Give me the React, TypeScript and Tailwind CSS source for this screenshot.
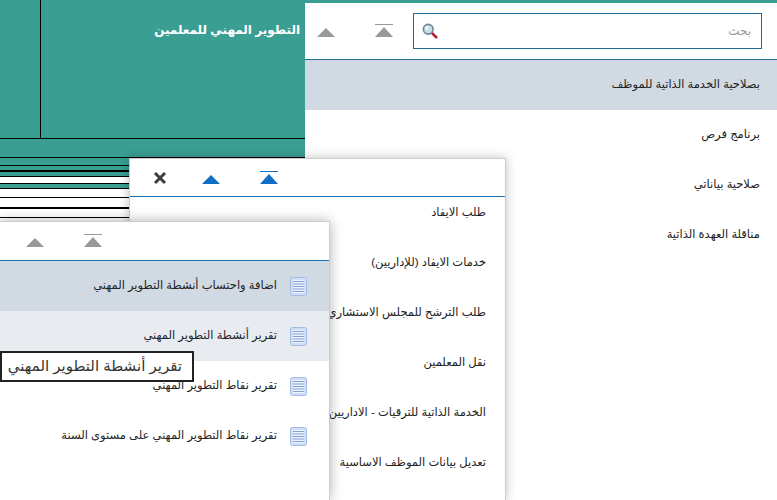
const font = "[font-family:'Liberation_Sans','DejaVu_Sans',sans-serif]";

function UpIcon({ top, color }: { top?: boolean; color: string }) {
  return (
    <svg width="18" height="14" viewBox="0 0 18 14" fill={color}>
      {top && <rect x="0" y="0" width="18" height="1" />}
      <path d={top ? "M9 3 L18 13 H0 Z" : "M9 4 L18 13 H0 Z"} />
    </svg>
  );
}

function CloseIcon() {
  return (
    <svg width="14" height="14" viewBox="0 0 14 14" stroke="#3d3d3d" strokeWidth="3" fill="none">
      <path d="M2 2 L12 12 M12 2 L2 12" />
    </svg>
  );
}

function SearchIcon() {
  return (
    <svg width="16" height="16" viewBox="0 0 18 18" fill="none">
      <path d="M10.5 10.5 L16 16" stroke="#b8232f" strokeWidth="3" strokeLinecap="round" />
      <circle cx="7" cy="7" r="5.5" fill="#bfe0e8" stroke="#75858e" strokeWidth="1.8" />
      <circle cx="5.5" cy="5.5" r="2" fill="#eef8fa" />
    </svg>
  );
}

function DocIcon() {
  return (
    <svg width="17" height="19" viewBox="0 0 17 19" className="shrink-0">
      <rect x="0.5" y="0.5" width="16" height="18" rx="2" fill="#cfdef6" stroke="#a3bbe6" />
      <rect x="3" y="3" width="11" height="13" fill="#eef3fc" />
      <path d="M3 4.5 H14 M3 7 H14 M3 9.5 H14 M3 12 H14 M3 14.5 H14" stroke="#7f9fd6" strokeWidth="1" />
    </svg>
  );
}

function Row({ label, className = "", icon }: { label: string; className?: string; icon?: boolean }) {
  return (
    <div className={`flex h-[50px] items-center gap-[13px] text-[11.5px] text-[#222] ${className}`}>
      {icon && <DocIcon />}
      <span className="whitespace-nowrap">{label}</span>
    </div>
  );
}

export default function App() {
  return (
    <div dir="ltr" className={`relative h-[500px] w-[777px] overflow-hidden bg-white ${font}`}>
      {/* page behind the windows */}
      <div className="h-[176px] bg-[#3a9e93]">
        <div className="flex h-[139px] border-b border-black">
          <div className="w-[41px] border-r border-black" />
          <div className="flex-1 pr-[476px] pt-[21px] text-right text-[12px] font-bold text-white" dir="rtl">
            <span className="mr-[1px] block whitespace-nowrap">التطوير المهني للمعلمين</span>
          </div>
        </div>
        <div className="h-[19px] border-b border-black" />
        <div className="h-[8px] border-b border-black" />
        <div className="h-[6px] border-b-2 border-black" />
        <div className="h-[5px] border-b border-black" />
      </div>
      <div className="h-[8px] border-b border-black" />
      <div className="h-[5px] border-b border-black bg-[#3a9e93]" />
      <div className="h-[9px] border-b border-black" />
      <div className="h-[11px] border-b-2 border-black" />
      <div className="h-[9px] border-b border-black" />

      {/* windows */}
      <div dir="rtl" className="absolute left-[305px] top-[3px] h-[497px] w-[472px] bg-white">
        <div className="flex h-[57px] items-center gap-[20px] border-b border-[#1f6a96] pr-[15px]">
          <div className="flex h-[36px] w-[349px] items-center justify-between border border-[#1f6a96] pl-[8px] pr-[10px] text-[12px] text-[#999]">
            <span>بحث</span>
            <SearchIcon />
          </div>
          <UpIcon top color="#999" />
          <div className="mr-[20px]">
            <UpIcon color="#999" />
          </div>
        </div>
        <div className="pr-[17px]">
          <Row label="بصلاحية الخدمة الذاتية للموظف" className="-mr-[17px] bg-[#d1dae3] pr-[17px]" />
          <Row label="برنامج فرص" />
          <Row label="صلاحية بياناتي" />
          <Row label="مناقلة العهدة الذاتية" />
        </div>
      </div>

      <div dir="rtl" className="absolute left-[129px] top-[158px] h-[342px] w-[377px] border-l border-t border-r border-[#ccc] bg-white pr-[19px] shadow-[0_0_10px_rgba(0,0,0,0.25)]">
        <div className="-mr-[19px] flex h-[38px] items-center justify-end gap-[40px] border-b border-[#1f6fb5] pl-[23px]">
          <UpIcon top color="#0f6fc6" />
          <UpIcon color="#0f6fc6" />
          <div className="-mr-[5px]">
            <CloseIcon />
          </div>
        </div>
        <Row label="طلب الايفاد" className="-mt-[9px]" />
        <Row label="خدمات الايفاد (للإداريين)" />
        <Row label="طلب الترشح للمجلس الاستشاري" />
        <Row label="نقل المعلمين" />
        <Row label="الخدمة الذاتية للترقيات - الاداريين" />
        <Row label="تعديل بيانات الموظف الاساسية" />
      </div>

      <div dir="rtl" className="absolute left-0 top-[221px] h-[279px] w-[330px] border-t border-r border-[#ccc] bg-white shadow-[0_0_12px_rgba(0,0,0,0.3)]">
        <div className="flex h-[39px] items-center justify-end gap-[40px] border-b border-[#1f6fb5] pl-[26px]">
          <UpIcon top color="#999" />
          <UpIcon color="#999" />
        </div>
        <Row icon label="اضافة واحتساب أنشطة التطوير المهني" className="bg-[#d1dae3] pr-[22px]" />
        <Row icon label="تقرير أنشطة التطوير المهني" className="bg-[#e8ecf1] pr-[22px]" />
        <Row icon label="تقرير نقاط التطوير المهني" className="pr-[22px]" />
        <Row icon label="تقرير نقاط التطوير المهني على مستوى السنة" className="pr-[22px]" />
      </div>

      <div dir="rtl" className="absolute left-0 top-[351px] flex h-[31px] w-[194px] items-center border-2 border-[#222] bg-white pr-[10px] text-[15px] text-[#333]">
        <span className="whitespace-nowrap">تقرير أنشطة التطوير المهني</span>
      </div>
    </div>
  );
}
